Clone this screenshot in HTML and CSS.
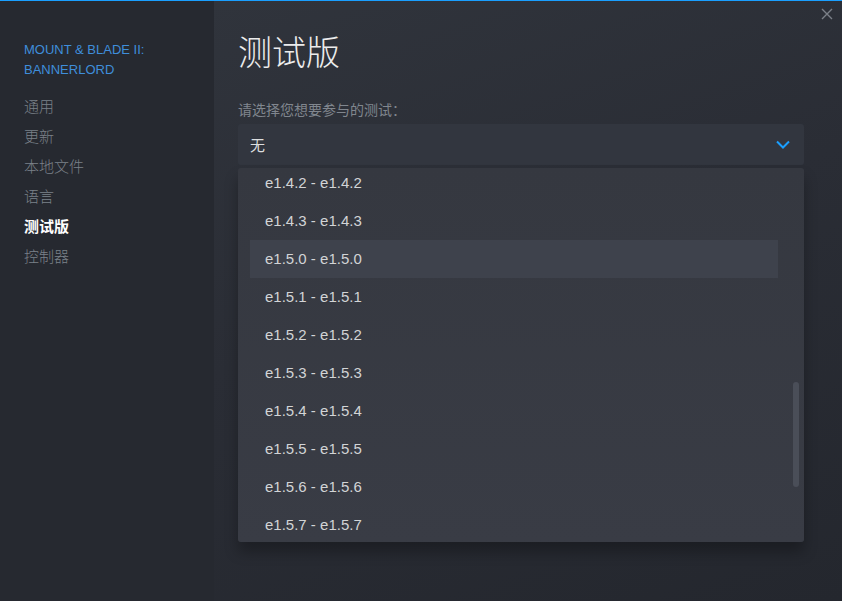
FILE: index.html
```html
<!DOCTYPE html>
<html lang="zh-CN">
<head>
<meta charset="utf-8">
<title>测试版</title>
<link rel="stylesheet" href="styles.css">
</head>
<body>
<div class="app">
  <aside class="sidebar">
    <div class="game-title">MOUNT &amp; BLADE II:<br>BANNERLORD</div>
    <nav class="nav">
      <div class="nav-item">通用</div>
      <div class="nav-item">更新</div>
      <div class="nav-item">本地文件</div>
      <div class="nav-item">语言</div>
      <div class="nav-item active">测试版</div>
      <div class="nav-item">控制器</div>
    </nav>
  </aside>
  <main class="content">
    <h1 class="page-title">测试版</h1>
    <div class="label">请选择您想要参与的测试：</div>
    <div class="select">
      <span class="select-value">无</span>
      <svg class="chevron" width="14" height="9" viewBox="0 0 14 9"><path d="M1 1.5 L7 7.5 L13 1.5" fill="none" stroke="#1a9fff" stroke-width="2"/></svg>
    </div>
    <div class="dropdown">
      <div class="options">
        <div class="option">e1.4.2 - e1.4.2</div>
        <div class="option">e1.4.3 - e1.4.3</div>
        <div class="option hover">e1.5.0 - e1.5.0</div>
        <div class="option">e1.5.1 - e1.5.1</div>
        <div class="option">e1.5.2 - e1.5.2</div>
        <div class="option">e1.5.3 - e1.5.3</div>
        <div class="option">e1.5.4 - e1.5.4</div>
        <div class="option">e1.5.5 - e1.5.5</div>
        <div class="option">e1.5.6 - e1.5.6</div>
        <div class="option">e1.5.7 - e1.5.7</div>
      </div>
      <div class="scrollbar"></div>
    </div>
  </main>
  <button class="close" aria-label="关闭">
    <svg width="12" height="12" viewBox="0 0 12 12"><path d="M1 1 L11 11 M11 1 L1 11" stroke="#7b8088" stroke-width="1.4" fill="none"/></svg>
  </button>
</div>
</body>
</html>
```
FILE: styles.css
```css
html, body {
  margin: 0;
  padding: 0;
  width: 842px;
  height: 601px;
  overflow: hidden;
  background: #25282f;
}

.app {
  position: relative;
  display: flex;
  width: 842px;
  height: 601px;
  border-top: 1px solid #1a9fff;
  box-sizing: border-box;
  font-family: "Liberation Sans", "Noto Sans CJK SC", sans-serif;
}

.sidebar {
  width: 214px;
  flex: none;
  background: #262930;
  padding: 39px 0 0 24px;
  box-sizing: border-box;
}

.game-title {
  color: #3f8edb;
  font-size: 13px;
  line-height: 20px;
  text-transform: uppercase;
}

.nav {
  margin-top: 11px;
  display: flex;
  flex-direction: column;
}

.nav-item {
  font-family: "Noto Sans CJK SC", sans-serif;
  font-size: 15px;
  line-height: 30px;
  color: #7b8189;
  font-weight: 300;
}

.nav-item.active {
  color: #ffffff;
  font-weight: 700;
}

.content {
  flex: 1;
  padding: 29px 38px 0 24px;
  box-sizing: border-box;
  background: linear-gradient(160deg, #30343c 0%, #2a2d35 45%, #24272e 100%);
  display: flex;
  flex-direction: column;
}

.page-title {
  margin: 0;
  font-family: "Noto Sans CJK SC", sans-serif;
  font-weight: 300;
  font-size: 34px;
  line-height: 42px;
  color: #ececec;
}

.label {
  margin-top: 27px;
  font-family: "Noto Sans CJK SC", sans-serif;
  font-size: 14px;
  line-height: 20px;
  color: #80868e;
}

.select {
  margin-top: 5px;
  height: 41px;
  background: #32363f;
  border-radius: 3px;
  display: flex;
  align-items: center;
  justify-content: space-between;
  padding: 0 14px 0 12px;
  box-sizing: border-box;
}

.select-value {
  font-family: "Noto Sans CJK SC", sans-serif;
  font-size: 15px;
  color: #dcdedf;
}

.chevron {
  display: block;
}

.dropdown {
  position: relative;
  margin-top: 3px;
  height: 374px;
  overflow: hidden;
  background: linear-gradient(180deg, #353840 0%, #393c45 100%);
  border-radius: 3px;
  box-shadow: 0 10px 14px rgba(0, 0, 0, 0.28);
  padding: 0 26px 0 12px;
  box-sizing: border-box;
}

.options {
  margin-top: -4px;
}

.option {
  height: 38px;
  line-height: 38px;
  padding-left: 15px;
  font-size: 15px;
  color: #d2d4d6;
}

.option.hover {
  background: #3e424c;
}

.scrollbar {
  position: absolute;
  right: 5px;
  top: 214px;
  width: 6px;
  height: 105px;
  border-radius: 3px;
  background: #4a4e58;
}

.close {
  position: absolute;
  top: 7px;
  right: 9px;
  width: 12px;
  height: 12px;
  padding: 0;
  border: 0;
  background: none;
  display: flex;
}
```
